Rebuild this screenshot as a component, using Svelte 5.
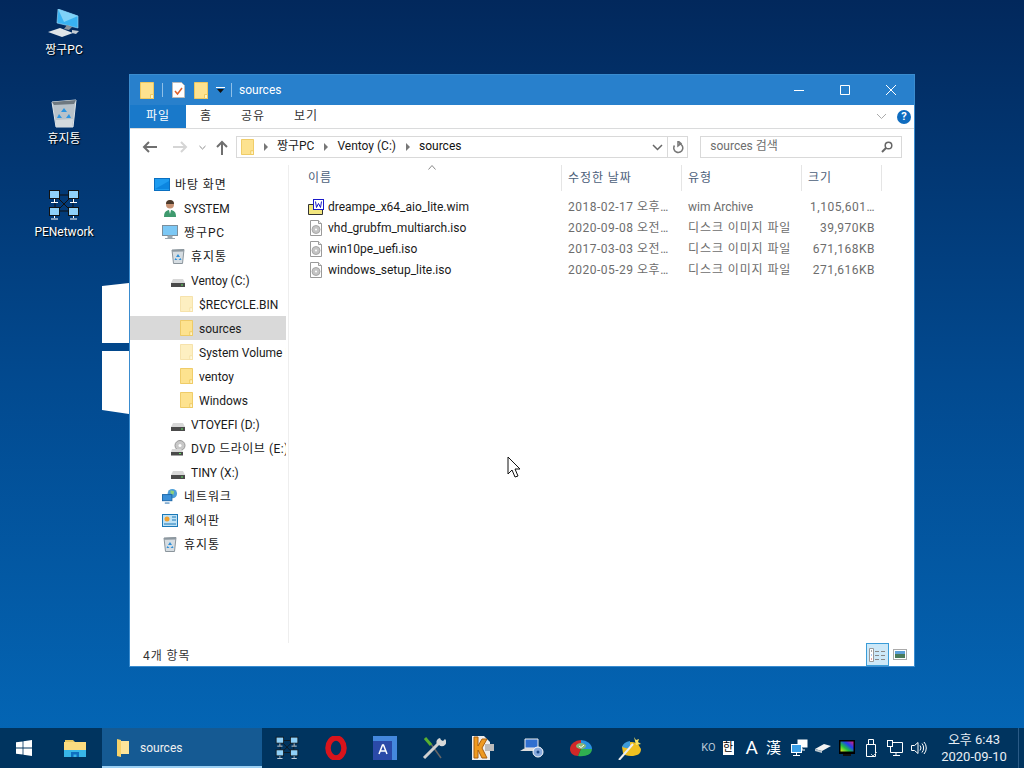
<script>
  const tree = [
    { label: '바탕 화면', icon: 'desk', level: 0 },
    { label: 'SYSTEM', icon: 'user', level: 1 },
    { label: '짱구PC', icon: 'pc', level: 1 },
    { label: '휴지통', icon: 'bin', level: 2 },
    { label: 'Ventoy (C:)', icon: 'drive', level: 2 },
    { label: '$RECYCLE.BIN', icon: 'faded', level: 3 },
    { label: 'sources', icon: 'folder', level: 3, selected: true },
    { label: 'System Volume Information', icon: 'faded', level: 3 },
    { label: 'ventoy', icon: 'folder', level: 3 },
    { label: 'Windows', icon: 'folder', level: 3 },
    { label: 'VTOYEFI (D:)', icon: 'drive', level: 2 },
    { label: 'DVD 드라이브 (E:) Ventoy', icon: 'dvd', level: 2, tight: true },
    { label: 'TINY (X:)', icon: 'drive', level: 2 },
    { label: '네트워크', icon: 'net', level: 1 },
    { label: '제어판', icon: 'panel', level: 1 },
    { label: '휴지통', icon: 'bin', level: 1 }
  ];

  const files = [
    { name: 'dreampe_x64_aio_lite.wim', date: '2018-02-17 오후…', type: 'wim Archive', size: '1,105,601…', wim: true },
    { name: 'vhd_grubfm_multiarch.iso', date: '2020-09-08 오전…', type: '디스크 이미지 파일', size: '39,970KB' },
    { name: 'win10pe_uefi.iso', date: '2017-03-03 오전…', type: '디스크 이미지 파일', size: '671,168KB' },
    { name: 'windows_setup_lite.iso', date: '2020-05-29 오후…', type: '디스크 이미지 파일', size: '271,616KB' }
  ];

  const columns = ['이름', '수정한 날짜', '유형', '크기'];
  const tabs = ['홈', '공유', '보기'];

  // hangul runs a bit wider in the original font
  const hasKo = (s) => /[\uac00-\ud7a3]/.test(s);
</script>

{#snippet folder(faded = false, w = 14, h = 17)}
  <svg width={w} height={h} viewBox="0 0 14 17" preserveAspectRatio="none" class:faded>
    <path d="M.5.5h13v16H.5z" fill="#fde28f" stroke="#eec85f" />
    <path d="M10.500 16.500v-4h3v4z" fill="#fff3c4" stroke="#eec85f" />
  </svg>
{/snippet}

{#snippet netmap(size)}
  <svg width={size} height={size} viewBox="0 0 32 32">
    <path d="M8 7L24 23M24 7L8 23M10 6h12M10 22h12M7 10v8M25 10v8" stroke="#111" fill="none" />
    <g fill="#8fd0f8" stroke="#111">
      <rect x="1.500" y="1.500" width="10" height="8" />
      <rect x="20.500" y="1.500" width="10" height="8" />
      <rect x="1.500" y="18.500" width="10" height="8" />
      <rect x="20.500" y="18.500" width="10" height="8" />
    </g>
    <path d="M6.500 10v3M3 13.500h7M25.500 10v3M22 13.500h7M6.500 27v2M3 30h7M25.500 27v2M22 30h7" stroke="#fff" fill="none" />
  </svg>
{/snippet}

{#snippet binIcon()}
  <svg width="16" height="16" viewBox="0 0 16 16">
    <path d="M2 2l12-.5-1.500 14h-9z" fill="#d6dde2" stroke="#8b959c" />
    <path d="M2 2l12-.5-.3 2-11.400.3z" fill="#8d98a0" />
    <path d="M8 6l2 3H6zM5.500 10l-1 2h3zM10.500 10l1 2h-3z" fill="#2f8fd8" />
  </svg>
{/snippet}

{#snippet driveIcon()}
  <svg width="16" height="16" viewBox="0 0 16 16">
    <path d="M3 7h10l2 4H1z" fill="#d8d8d8" />
    <rect x="1" y="11" width="14" height="4" fill="#4a4a4a" />
    <rect x="11" y="12.500" width="2" height="1" fill="#5fe05f" />
  </svg>
{/snippet}

{#snippet discIcon()}
  <svg width="12" height="16" viewBox="0 0 12 16">
    <path d="M.5.5h8l3 3v12H.5z" fill="#fff" stroke="#9a9a9a" />
    <path d="M8.500.5v3h3" fill="#eee" stroke="#9a9a9a" />
    <circle cx="6" cy="9.500" r="4" fill="#c4c4c4" stroke="#a8a8a8" />
    <circle cx="6" cy="9.500" r="1" fill="#fff" />
  </svg>
{/snippet}

{#snippet treeIcon(kind)}
  {#if kind === 'folder'}
    {@render folder(false, 13, 16)}
  {:else if kind === 'faded'}
    {@render folder(true, 13, 16)}
  {:else if kind === 'desk'}
    <svg width="16" height="13" viewBox="0 0 16 13">
      <rect x=".5" y=".5" width="15" height="12" fill="#1e9cf0" stroke="#0a6fc0" />
      <path d="M1 11L15 3v8z" fill="#0c86e0" />
    </svg>
  {:else if kind === 'user'}
    <svg width="14" height="17" viewBox="0 0 14 17">
      <circle cx="7" cy="4.500" r="4" fill="#c79273" />
      <path d="M3 4a4 4 0 0 1 8 0z" fill="#4c3a2c" />
      <path d="M1 17c0-5 2-7 6-7s6 2 6 7z" fill="#3f9a6e" />
      <path d="M6 10h2l-1 4z" fill="#fff" />
    </svg>
  {:else if kind === 'pc'}
    <svg width="16" height="15" viewBox="0 0 16 15">
      <rect x=".5" y=".5" width="15" height="10" fill="#7cc8f5" stroke="#7c8f9c" />
      <path d="M6 11h4v2H6zM3 13.500h10" fill="#9aa6ae" stroke="#9aa6ae" />
    </svg>
  {:else if kind === 'bin'}
    {@render binIcon()}
  {:else if kind === 'drive'}
    {@render driveIcon()}
  {:else if kind === 'dvd'}
    <svg width="16" height="16" viewBox="0 0 16 16">
      <circle cx="10" cy="5.500" r="5" fill="#c8c8c8" stroke="#999" />
      <circle cx="10" cy="5.500" r="1.500" fill="#fff" />
      <path d="M2 9h9l2 3H1z" fill="#d8d8d8" />
      <rect x="1" y="12" width="12" height="3.500" fill="#4a4a4a" />
      <rect x="9" y="13" width="2" height="1" fill="#5fe05f" />
    </svg>
  {:else if kind === 'net'}
    <svg width="17" height="16" viewBox="0 0 17 16">
      <circle cx="11" cy="5.500" r="5" fill="#4d9ed8" />
      <path d="M9 2l4 1-1 4-3-2z" fill="#8fd07a" />
      <rect x=".5" y="6.500" width="10" height="6.500" fill="#3a8fd8" stroke="#1a66a8" />
      <path d="M3 15.500h5" stroke="#1a66a8" />
    </svg>
  {:else if kind === 'panel'}
    <svg width="16" height="13" viewBox="0 0 16 13">
      <rect x=".5" y=".5" width="15" height="12" fill="#bfe2f5" stroke="#1a78b8" />
      <circle cx="5" cy="5" r="2.500" fill="#f0a030" />
      <path d="M10 3h4M10 6h4M2 10h12" stroke="#1a78b8" />
    </svg>
  {/if}
{/snippet}

<div class="desktop">
  <svg class="wallpaper" width="27" height="135" viewBox="0 0 27 135">
    <path d="M0 5L27 2V62H0z" fill="#fff" />
    <path d="M0 70H27V133L0 129z" fill="#fff" />
  </svg>

  <div class="desk-icon first">
    <svg width="32" height="30" viewBox="0 0 32 30">
      <path d="M10 0L30 7V19L9 14z" fill="#38b2f2" stroke="#a8dcf6" stroke-width=".6" />
      <path d="M10 0L30 7 16 13z" fill="#7fd2f8" />
      <path d="M19 16l5 2-3 3-5-1z" fill="#8a949c" />
      <path d="M0 23L12 19 25 24 14 28z" fill="#dfe4e8" />
      <path d="M24 21l7 1-3 3-4-1z" fill="#c4ccd2" />
    </svg>
    <span>짱구PC</span>
  </div>
  <div class="desk-icon second">
    <svg width="28" height="30" viewBox="0 0 28 30">
      <path d="M2 4l24-2-3 27H6z" fill="#b8c2ca" stroke="#dfe5e9" />
      <path d="M2 4l24-2-2 4-20 1z" fill="#6e7880" />
      <path d="M6 22l17-1-1 8H6z" fill="#d4dade" />
      <path d="M14 10l3 4h-6zM9 16l-2 4h5zM19 16l2 4h-5z" fill="#2b95e2" />
    </svg>
    <span>휴지통</span>
  </div>
  <div class="desk-icon third">
    {@render netmap(32)}
    <span>PENetwork</span>
  </div>

  <section class="window">
    <header class="titlebar">
      {@render folder()}
      <i class="qsep"></i>
      <svg class="qcheck" width="13" height="16" viewBox="0 0 13 16">
        <path d="M.5.5h9l3 3v12H.5z" fill="#fff" stroke="#bbb" />
        <path d="M3 9l2.500 3 4.500-6" fill="none" stroke="#e0602a" stroke-width="1.500" />
      </svg>
      {@render folder()}
      <svg class="qdrop" width="9" height="7" viewBox="0 0 9 7">
        <path d="M0 .5h9" stroke="#fff" />
        <path d="M1 2h7L4.500 6z" fill="#111" />
      </svg>
      <i class="qsep"></i>
      <span>sources</span>
      <div class="winbtns">
        <svg width="46" height="30" viewBox="0 0 46 30"><path d="M18 15.500h10" stroke="#fff" /></svg>
        <svg width="46" height="30" viewBox="0 0 46 30"><path d="M18.500 10.500h9v9h-9z" stroke="#fff" fill="none" /></svg>
        <svg width="46" height="30" viewBox="0 0 46 30"><path d="M18 10l10 10M28 10L18 20" stroke="#fff" fill="none" /></svg>
      </div>
    </header>

    <nav class="ribbon">
      <span class="tab file">파일</span>
      {#each tabs as tab}
        <span class="tab">{tab}</span>
      {/each}
      <svg class="collapse" width="11" height="7" viewBox="0 0 11 7"><path d="M1 1l4.500 4.500L10 1" fill="none" stroke="#aaa" /></svg>
      <span class="help">?</span>
    </nav>

    <div class="addressrow">
      <svg width="16" height="14" viewBox="0 0 16 14"><path d="M15 7H2M7 2L2 7l5 5" fill="none" stroke="#6f6f6f" stroke-width="2" /></svg>
      <svg class="fwd" width="16" height="14" viewBox="0 0 16 14"><path d="M1 7h13M9 2l5 5-5 5" fill="none" stroke="#d5d5d5" stroke-width="2" /></svg>
      <svg class="recent" width="7" height="5" viewBox="0 0 7 5"><path d="M.5 1l3 3 3-3" fill="none" stroke="#888" /></svg>
      <svg class="up" width="14" height="15" viewBox="0 0 14 15"><path d="M7 15V2M2 7l5-5 5 5" fill="none" stroke="#6f6f6f" stroke-width="2" /></svg>
      <div class="addressbar">
        {@render folder(false, 13, 16)}
        <b class="crumbsep"></b><span>짱구PC</span>
        <b class="crumbsep"></b><span>Ventoy (C:)</span>
        <b class="crumbsep"></b><span class="now">sources</span>
        <svg class="dropdown" width="11" height="7" viewBox="0 0 11 7"><path d="M1 1l4.500 4.500L10 1" fill="none" stroke="#666" stroke-width="1.500" /></svg>
        <div class="refresh">
          <svg width="12" height="13" viewBox="0 0 12 13"><path d="M7 2.500a4.500 4.500 0 1 1-4.500 2M6 0v5l3-2.500z" fill="none" stroke="#777" stroke-width="1.500" /></svg>
        </div>
      </div>
      <div class="searchbox">
        <span>sources 검색</span>
        <svg width="12" height="12" viewBox="0 0 12 12"><circle cx="7.500" cy="4.500" r="3.300" fill="none" stroke="#666" stroke-width="1.500" /><path d="M5 7l-4 4" stroke="#666" stroke-width="2" /></svg>
      </div>
    </div>

    <div class="body">
      <aside class="tree">
        {#each tree as item}
          <div class="node lv{item.level}" class:selected={item.selected}>
            <span class="nodeicon">{@render treeIcon(item.icon)}</span>
            <span class="nodetext" class:ko={hasKo(item.label)} class:tight={item.tight}>{item.label}</span>
          </div>
        {/each}
      </aside>
      <main class="list">
        <svg class="sort" width="8" height="5" viewBox="0 0 8 5"><path d="M.5 4.500l3.500-4 3.500 4" fill="none" stroke="#888" /></svg>
        <div class="cols head">
          {#each columns as col}
            <span class="ko">{col}</span>
          {/each}
        </div>
        {#each files as f}
          <div class="cols row">
            <span class="name">
              <span class="fileicon">
                {#if f.wim}
                  <svg width="16" height="16" viewBox="0 0 16 16">
                    <path d="M.5 5.500h14v10H.5z" fill="#f2e67e" stroke="#333" />
                    <rect x="5.500" y=".5" width="10" height="10" fill="#fff" stroke="#1a1ac8" />
                    <path d="M7.500 2.500l1 6 2-4 2 4 1-6" fill="none" stroke="#1a1ac8" />
                  </svg>
                {:else}
                  {@render discIcon()}
                {/if}
              </span>
              {f.name}
            </span>
            <span class="num">{f.date}</span>
            <span class:ko={hasKo(f.type)}>{f.type}</span>
            <span class="size num">{f.size}</span>
          </div>
        {/each}
      </main>
    </div>

    <footer class="status">
      <span class="ko count">4개 항목</span>
      <div class="views">
        <span class="view active">
          <svg width="18" height="14" viewBox="0 0 18 14">
            <path d="M.5.500h4v13h-4z" fill="#fff" stroke="#999" />
            <path d="M2 2.500h1v1H2z" fill="#555" /><path d="M2 6.500h1v1H2z" fill="#5b8fe0" /><path d="M2 10.500h1v1H2z" fill="#d04040" />
            <path d="M6 3.500h4M12 3.500h4M6 7.500h4M12 7.500h4M6 11.500h4M12 11.500h4" stroke="#888" />
          </svg>
        </span>
        <span class="view">
          <svg width="14" height="11" viewBox="0 0 14 11">
            <rect x=".5" y=".5" width="13" height="10" fill="#fff" stroke="#aaa" />
            <rect x="2" y="2" width="10" height="3" fill="#5da0d8" /><rect x="2" y="5" width="10" height="4" fill="#4a7a5a" />
          </svg>
        </span>
      </div>
    </footer>
  </section>

  <svg class="cursor" width="14" height="22" viewBox="0 0 14 22">
    <path d="M1 1v17l4-4 3 7 3-1-3-7h5z" fill="#fff" stroke="#111" />
  </svg>

  <div class="taskbar">
    <span class="start">
      <svg width="16" height="16" viewBox="0 0 16 16"><path d="M0 2.300l6.600-.9v6.200H0zM7.400 1.300L16 0v7.600H7.400zM0 8.400h6.600v6.200L0 13.700zM7.400 8.400H16V16l-8.600-1.300z" fill="#fff" /></svg>
    </span>
    <span class="pin explorer">
      <svg width="22" height="18" viewBox="0 0 22 18">
        <path d="M1 1h8l2 2h10v5H1z" fill="#e8c860" />
        <path d="M0 3h22v15H0z" fill="#fbdc80" />
        <path d="M0 11h22v7H0z" fill="#38b6e8" />
        <path d="M7 18v-5h8v5h-2.500v-2.500h-3V18z" fill="#0f6fc0" />
      </svg>
    </span>
    <div class="active-task">
      <svg width="15" height="20" viewBox="0 0 15 20"><path d="M2 1l4 1v17l-4-1z" fill="#f6d26a" /><path d="M6 3h8v13H6z" fill="#fde59a" /></svg>
      <span>sources</span>
    </div>
    <div class="pins">
      <span class="pin">{@render netmap(24)}</span>
      <span class="pin">
        <svg width="22" height="24" viewBox="0 0 22 24"><ellipse cx="11" cy="12" rx="8" ry="10" fill="none" stroke="#d8141c" stroke-width="5.500" /></svg>
      </span>
      <span class="pin">
        <svg width="24" height="24" viewBox="0 0 24 24"><rect x="0" y="0" width="24" height="24" fill="#4488dd" /><rect x="0" y="5" width="19" height="19" fill="#2a4aa8" /><path d="M6 18l3.500-9h1l3.500 9M7.500 15h5" fill="none" stroke="#fff" stroke-width="1.500" /></svg>
      </span>
      <span class="pin">
        <svg width="24" height="24" viewBox="0 0 24 24"><path d="M19 22L9 8" stroke="#666" stroke-width="1.500" /><path d="M9 9L3 2" stroke="#58b030" stroke-width="3" /><path d="M2 22L17 7" stroke="#d0d0d0" stroke-width="3" /><path d="M15 8a4 4 0 0 1 3-6l1 2 2 1 2-2a4 4 0 0 1-6 6z" fill="#d8d8d8" /></svg>
      </span>
      <span class="pin">
        <svg width="24" height="24" viewBox="0 0 24 24"><path d="M1 0h12l6 6v18H1z" fill="#eee" /><path d="M3 1h4v9l4-7h5l-5 9 5 10h-5l-4-8v8H3z" fill="#ee9a20" stroke="#a86010" /><rect x="14" y="8" width="9" height="7" fill="#bbb" /></svg>
      </span>
      <span class="pin">
        <svg width="24" height="22" viewBox="0 0 24 22"><path d="M5 2h13v9H5z" fill="#2f6fd0" stroke="#eee" /><path d="M0 14l5-3h13l2 3z" fill="#ddd" /><circle cx="18" cy="15" r="5" fill="#88aadd" stroke="#fff" /><circle cx="18" cy="15" r="1.500" fill="#1b4a8a" /></svg>
      </span>
      <span class="pin">
        <svg width="24" height="22" viewBox="0 0 24 22"><path d="M1 12a11 9 0 0 1 11-9l0 9-3 7C4 19 1 16 1 12z" fill="#d02828" /><path d="M12 3a11 9 0 0 1 11 9L12 12z" fill="#2a90e0" /><path d="M9 19l3-7 11 0c0 5-6 8-14 7z" fill="#30b050" /><ellipse cx="12" cy="9" rx="5" ry="3" fill="#88b878" /><path d="M10 9l2 1.500 3-2.500" stroke="#fff" fill="none" /></svg>
      </span>
      <span class="pin">
        <svg width="24" height="24" viewBox="0 0 24 24"><path d="M4 11a10 8 0 0 1 16-3l3 5c0 5-4 7-10 7-4 0-7-1-8-3z" fill="#f0c020" /><path d="M4 11a10 8 0 0 1 8-6l0 8z" fill="#3c9ad8" /><path d="M1 24L15 8" stroke="#eee" stroke-width="2" /><path d="M16 1l2 3 3-1-1 3 3 2-5 1z" fill="#f5e060" /></svg>
      </span>
    </div>
    <div class="tray">
      <span class="tko">KO</span>
      <span class="han">한</span>
      <span class="big-a">A</span>
      <span class="hanja">漢</span>
      <svg class="t-net" width="17" height="18" viewBox="0 0 17 18"><rect x="6.500" y=".5" width="10" height="8" fill="#fff" /><rect x=".5" y="5.500" width="10" height="8" fill="#3aa0e8" stroke="#fff" /><path d="M5.500 14v2M2 16.500h7M11 9v2h3" stroke="#fff" fill="none" /></svg>
      <svg class="t-drive" width="16" height="9" viewBox="0 0 16 9"><path d="M0 5l9-5 7 2-9 5z" fill="#f4f4f4" /><path d="M0 5l7 2v2L0 7z" fill="#b8c4cc" /></svg>
      <svg class="t-mon" width="16" height="17" viewBox="0 0 16 17">
        <defs><linearGradient id="spectrum" x1="0" y1="1" x2="1" y2="0"><stop offset="0" stop-color="#f0f020" /><stop offset=".35" stop-color="#20c040" /><stop offset=".65" stop-color="#2040f0" /><stop offset="1" stop-color="#e02080" /></linearGradient></defs>
        <rect x="0" y="0" width="16" height="14" fill="#000" /><rect x="1.500" y="1.500" width="13" height="10" fill="url(#spectrum)" /><rect x="4" y="14" width="8" height="2" fill="#111" />
      </svg>
      <svg class="t-usb" width="11" height="18" viewBox="0 0 11 18"><path d="M2.500.5h5v5h-5zM.5 5.500h9v12h-9z" fill="none" stroke="#fff" /><path d="M5 15l2 2 4-4" fill="none" stroke="#b8c4cc" /></svg>
      <svg class="t-lan" width="16" height="16" viewBox="0 0 16 16"><path d="M3.500 2.500h12v10h-12zM9 13v2M6 15.500h7" fill="none" stroke="#fff" /><rect x=".5" y=".5" width="5" height="6" fill="#003460" stroke="#fff" /></svg>
      <svg class="t-vol" width="16" height="14" viewBox="0 0 16 14"><path d="M.5 4.500h3l3.500-3v11l-3.500-3h-3z" fill="none" stroke="#fff" /><path d="M9 4.500a4 4 0 0 1 0 5M11 2.500a7 7 0 0 1 0 9M13 1a9 9 0 0 1 0 12" fill="none" stroke="#fff" /></svg>
      <div class="clock">
        <span>오후 6:43</span>
        <span>2020-09-10</span>
      </div>
      <i class="showdesk"></i>
    </div>
  </div>
</div>

<style>
  :global(body) {
    margin: 0;
    overflow: hidden;
  }

  .desktop {
    position: relative;
    width: 1024px;
    height: 768px;
    overflow: hidden;
    background: linear-gradient(180deg, #02285c 0%, #024a90 50%, #0468b8 100%);
    font-family: Roboto, "Noto Sans CJK KR", sans-serif;
    font-size: 12px;
    line-height: 16px;
    color: #1a1a1a;
  }

  .ko { letter-spacing: .9px; }
  .ko.tight { letter-spacing: .5px; }

  .wallpaper {
    position: absolute;
    left: 102px;
    top: 281px;
  }

  .desk-icon {
    position: absolute;
    left: 24px;
    width: 80px;
    display: flex;
    flex-direction: column;
    align-items: center;
    gap: 3px;
    color: #fff;
    text-shadow: 1px 1px 1px #000;
  }
  .first { top: 9px; }
  .second { top: 98px; }
  .third { top: 189px; }

  .window {
    position: absolute;
    left: 129px;
    top: 74px;
    width: 786px;
    height: 593px;
    box-sizing: border-box;
    border: 1px solid #3a8ccf;
    background: #fff;
    display: flex;
    flex-direction: column;
  }

  .titlebar {
    height: 30px;
    flex: none;
    background: #2880cc;
    display: flex;
    align-items: center;
    padding-left: 10px;
    color: #fff;
  }
  .qsep {
    width: 1px;
    height: 14px;
    margin: 0 9px 0 8px;
    background: #8fc0e8;
  }
  .qcheck { margin: 0 9px 0 0; }
  .qdrop { margin: 0 0 0 8px; }
  .qdrop + .qsep { margin-left: 6px; margin-right: 7px; }
  .winbtns {
    margin-left: auto;
    display: flex;
  }

  .ribbon {
    height: 24px;
    flex: none;
    box-sizing: border-box;
    border-bottom: 1px solid #dadbdc;
    display: flex;
    align-items: center;
    padding-right: 3px;
  }
  .tab {
    width: 56px;
    text-align: center;
    margin-right: -9px;
    color: #333;
    line-height: 23px;
    letter-spacing: .9px;
  }
  .tab.file {
    background: #1979ca;
    color: #fff;
    margin-right: -8px;
  }
  .tab:nth-child(4) { margin-left: 6px; }
  .collapse { margin-left: auto; margin-right: 10px; }
  .help {
    width: 14px;
    height: 14px;
    border-radius: 50%;
    background: #0f6cbf;
    color: #fff;
    font-weight: 700;
    font-size: 11px;
    line-height: 14px;
    text-align: center;
  }

  .addressrow {
    height: 36px;
    flex: none;
    display: flex;
    align-items: center;
    padding: 0 12px;
    box-sizing: border-box;
  }
  .fwd { margin-left: 14px; }
  .recent { margin-left: 11px; }
  .up { margin-left: 9px; }
  .addressbar {
    width: 453px;
    height: 22px;
    margin-left: 7px;
    box-sizing: border-box;
    border: 1px solid #d9d9d9;
    display: flex;
    align-items: center;
    padding-left: 4px;
  }
  .addressbar > span { padding-bottom: 2px; }
  .crumbsep {
    width: 0;
    height: 0;
    margin: 0 9px 0 10px;
    border-left: 4px solid #777;
    border-top: 4px solid transparent;
    border-bottom: 4px solid transparent;
  }
  .now { color: #111; }
  .dropdown { margin-left: auto; margin-right: 4px; }
  .refresh {
    width: 19px;
    height: 20px;
    border-left: 1px solid #d9d9d9;
    display: flex;
    align-items: center;
    justify-content: center;
  }
  .searchbox {
    width: 202px;
    height: 22px;
    margin-left: 12px;
    box-sizing: border-box;
    border: 1px solid #d9d9d9;
    display: flex;
    align-items: center;
    justify-content: space-between;
    padding: 0 8px 0 9px;
    color: #6d6d6d;
  }
  .searchbox span { padding-bottom: 2px; }

  .body {
    flex: 1;
    min-height: 0;
    display: flex;
  }
  .tree {
    width: 156px;
    flex: none;
    margin-right: 2px;
    padding-top: 7px;
    overflow: hidden;
  }
  .node {
    height: 24px;
    display: flex;
    align-items: center;
    white-space: nowrap;
    overflow: hidden;
    color: #1a1a1a;
  }
  .nodeicon {
    width: 16px;
    flex: none;
    display: flex;
    justify-content: center;
    margin-right: 6px;
  }
  .nodetext {
    flex: none;
    padding-top: 2px;
  }
  .lv0 { padding-left: 24px; }
  .lv1 { padding-left: 32px; }
  .lv2 { padding-left: 40px; }
  .lv3 { padding-left: 48px; }
  .lv0 .nodeicon { margin-right: 5px; }
  .lv2 .nodeicon { margin-right: 5px; }
  .lv3 .nodeicon { margin-right: 5px; }
  .selected { background: #d9d9d9; }
  .faded { opacity: .55; }

  .list {
    position: relative;
    flex: 1;
    border-left: 1px solid #eeeeee;
  }
  .sort {
    position: absolute;
    left: 139px;
    top: 0;
  }
  .cols {
    display: grid;
    grid-template-columns: 260px 120px 120px 80px;
    padding-left: 13px;
  }
  .cols > span {
    padding-left: 6px;
    white-space: nowrap;
    overflow: hidden;
  }
  .head {
    height: 26px;
    align-items: center;
    margin-bottom: 5px;
    color: #4c607a;
  }
  .head > span {
    line-height: 26px;
    border-right: 1px solid #e5e5e5;
  }
  .row {
    height: 21px;
    align-items: center;
    color: #6d6d6d;
  }
  .num { letter-spacing: .5px; }
  .row .name {
    display: flex;
    align-items: center;
    gap: 4px;
    color: #1a1a1a;
  }
  .fileicon {
    width: 16px;
    display: flex;
    justify-content: center;
  }
  .row .size {
    text-align: right;
    padding-right: 7px;
  }

  .status {
    height: 23px;
    flex: none;
    display: flex;
    align-items: center;
    justify-content: space-between;
    padding: 0 4px 0 13px;
    color: #333;
  }
  .count { padding-top: 2px; }
  .views {
    display: flex;
    align-items: center;
  }
  .view {
    width: 21px;
    height: 23px;
    box-sizing: border-box;
    display: flex;
    align-items: center;
    justify-content: center;
  }
  .view.active {
    width: 23px;
    background: #cce8f8;
    border: 1px solid #3a9cd8;
  }

  .cursor {
    position: absolute;
    left: 507px;
    top: 456px;
  }

  .taskbar {
    position: absolute;
    left: 0;
    right: 0;
    bottom: 0;
    height: 40px;
    background: #00345f;
    display: flex;
    align-items: center;
    color: #fff;
  }
  .start {
    width: 48px;
    display: flex;
    justify-content: center;
  }
  .pin {
    width: 49px;
    display: flex;
    justify-content: center;
    align-items: center;
  }
  .explorer { width: 54px; }
  .active-task {
    width: 160px;
    height: 40px;
    box-sizing: border-box;
    background: #155a93;
    border-bottom: 2px solid #9cd0f4;
    display: flex;
    align-items: center;
    gap: 10px;
    padding: 2px 0 0 13px;
    color: #f0f0f0;
  }
  .pins { display: flex; }
  .tray {
    margin-left: auto;
    display: flex;
    align-items: center;
  }
  .tko { color: #b8c8d8; font-size: 11px; }
  .han {
    width: 11px;
    height: 14px;
    margin-left: 7px;
    background: #fff;
    color: #000;
    font-size: 11px;
    line-height: 14px;
    text-align: center;
  }
  .big-a { margin-left: 12px; font-size: 19px; line-height: 20px; }
  .hanja { margin-left: 8px; font-size: 15px; line-height: 20px; }
  .t-net { margin-left: 10px; }
  .t-drive { margin-left: 7px; }
  .t-mon { margin-left: 8px; }
  .t-usb { margin-left: 11px; }
  .t-lan { margin-left: 10px; }
  .t-vol { margin-left: 8px; }
  .clock {
    display: flex;
    flex-direction: column;
    align-items: center;
    font-size: 13px;
    line-height: 17px;
    width: 76px;
    margin-left: 9px;
    margin-right: 6px;
    color: #e8eef4;
  }
  .showdesk {
    width: 5px;
    height: 40px;
    border-left: 1px solid #2a5a86;
  }
</style>
